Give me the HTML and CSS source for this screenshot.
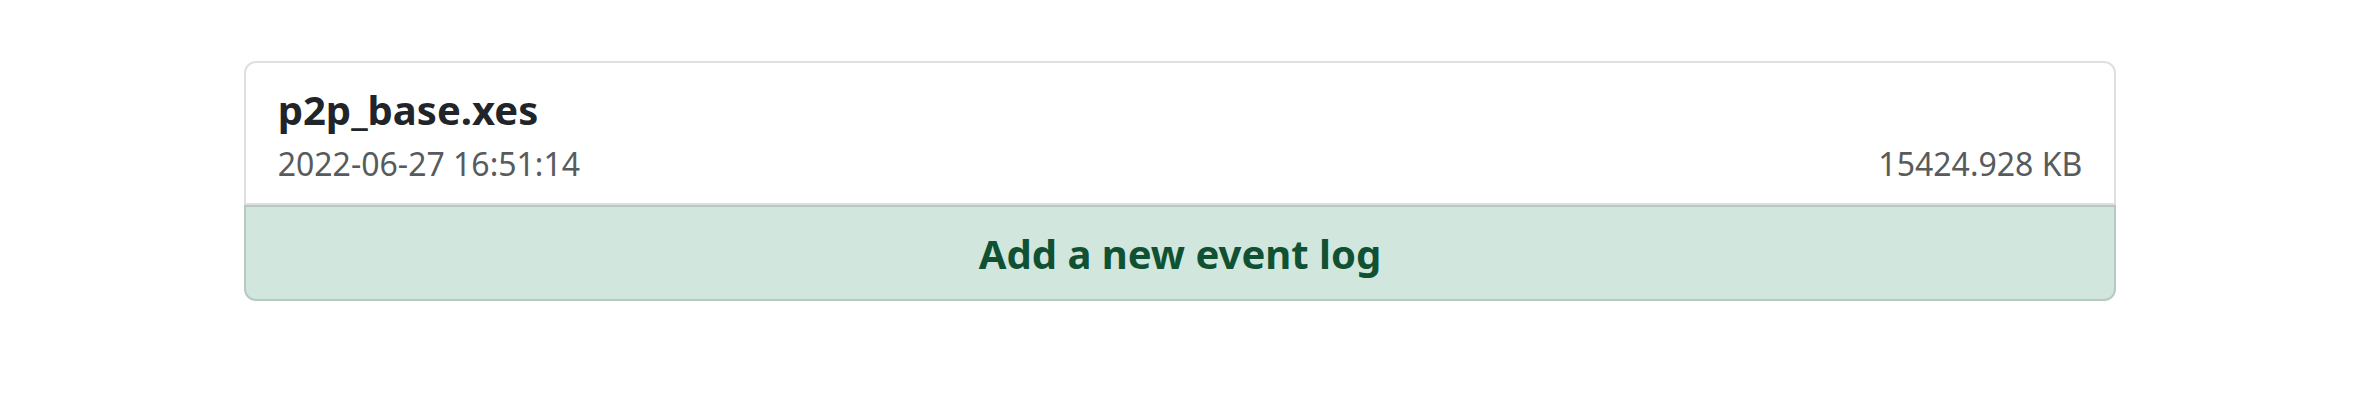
FILE: index.html
```html
<!DOCTYPE html>
<html lang="en">
<head>
<meta charset="utf-8">
<title>Event logs</title>
<link rel="stylesheet" href="styles.css">
</head>
<body>
<main class="container">
<div class="list-group">
<a href="#" class="item log">
<h5 class="log-name">p2p_base.xes</h5>
<span class="log-meta"><span>2022-06-27 16:51:14</span><span>15424.928 KB</span></span>
</a>
<button type="button" class="item add">Add a new event log</button>
</div>
</main>
</body>
</html>
```

FILE: styles.css
```css
* { box-sizing: border-box; }
body {
  margin: 0;
  background: #fff;
  color: #212529;
  font-family: "Noto Sans", sans-serif;
}
.container {
  width: 80%;
  margin: 0 auto;
  padding: 61px 5px 61px 8px;
}
.list-group {
  display: flex;
  flex-direction: column;
}
.item {
  display: block;
  border: 2px solid rgba(0, 0, 0, 0.125);
  text-decoration: none;
  font-family: inherit;
}
.log {
  padding: 23px 32px 15px;
  border-radius: 12px 12px 0 0;
  background: #fff;
  color: inherit;
}
.log-name {
  margin: 0 0 6px;
  font-size: 40px;
  line-height: 48px;
  font-weight: 700;
}
.log-meta {
  display: flex;
  justify-content: space-between;
  color: #585b5e;
  font-size: 32px;
  line-height: 48px;
}
.add {
  padding: 23px 32px 21px;
  border-radius: 0 0 12px 12px;
  background: #d1e7dd;
  color: #0f5132;
  font-size: 40px;
  line-height: 48px;
  font-weight: 700;
  text-align: center;
}
```
